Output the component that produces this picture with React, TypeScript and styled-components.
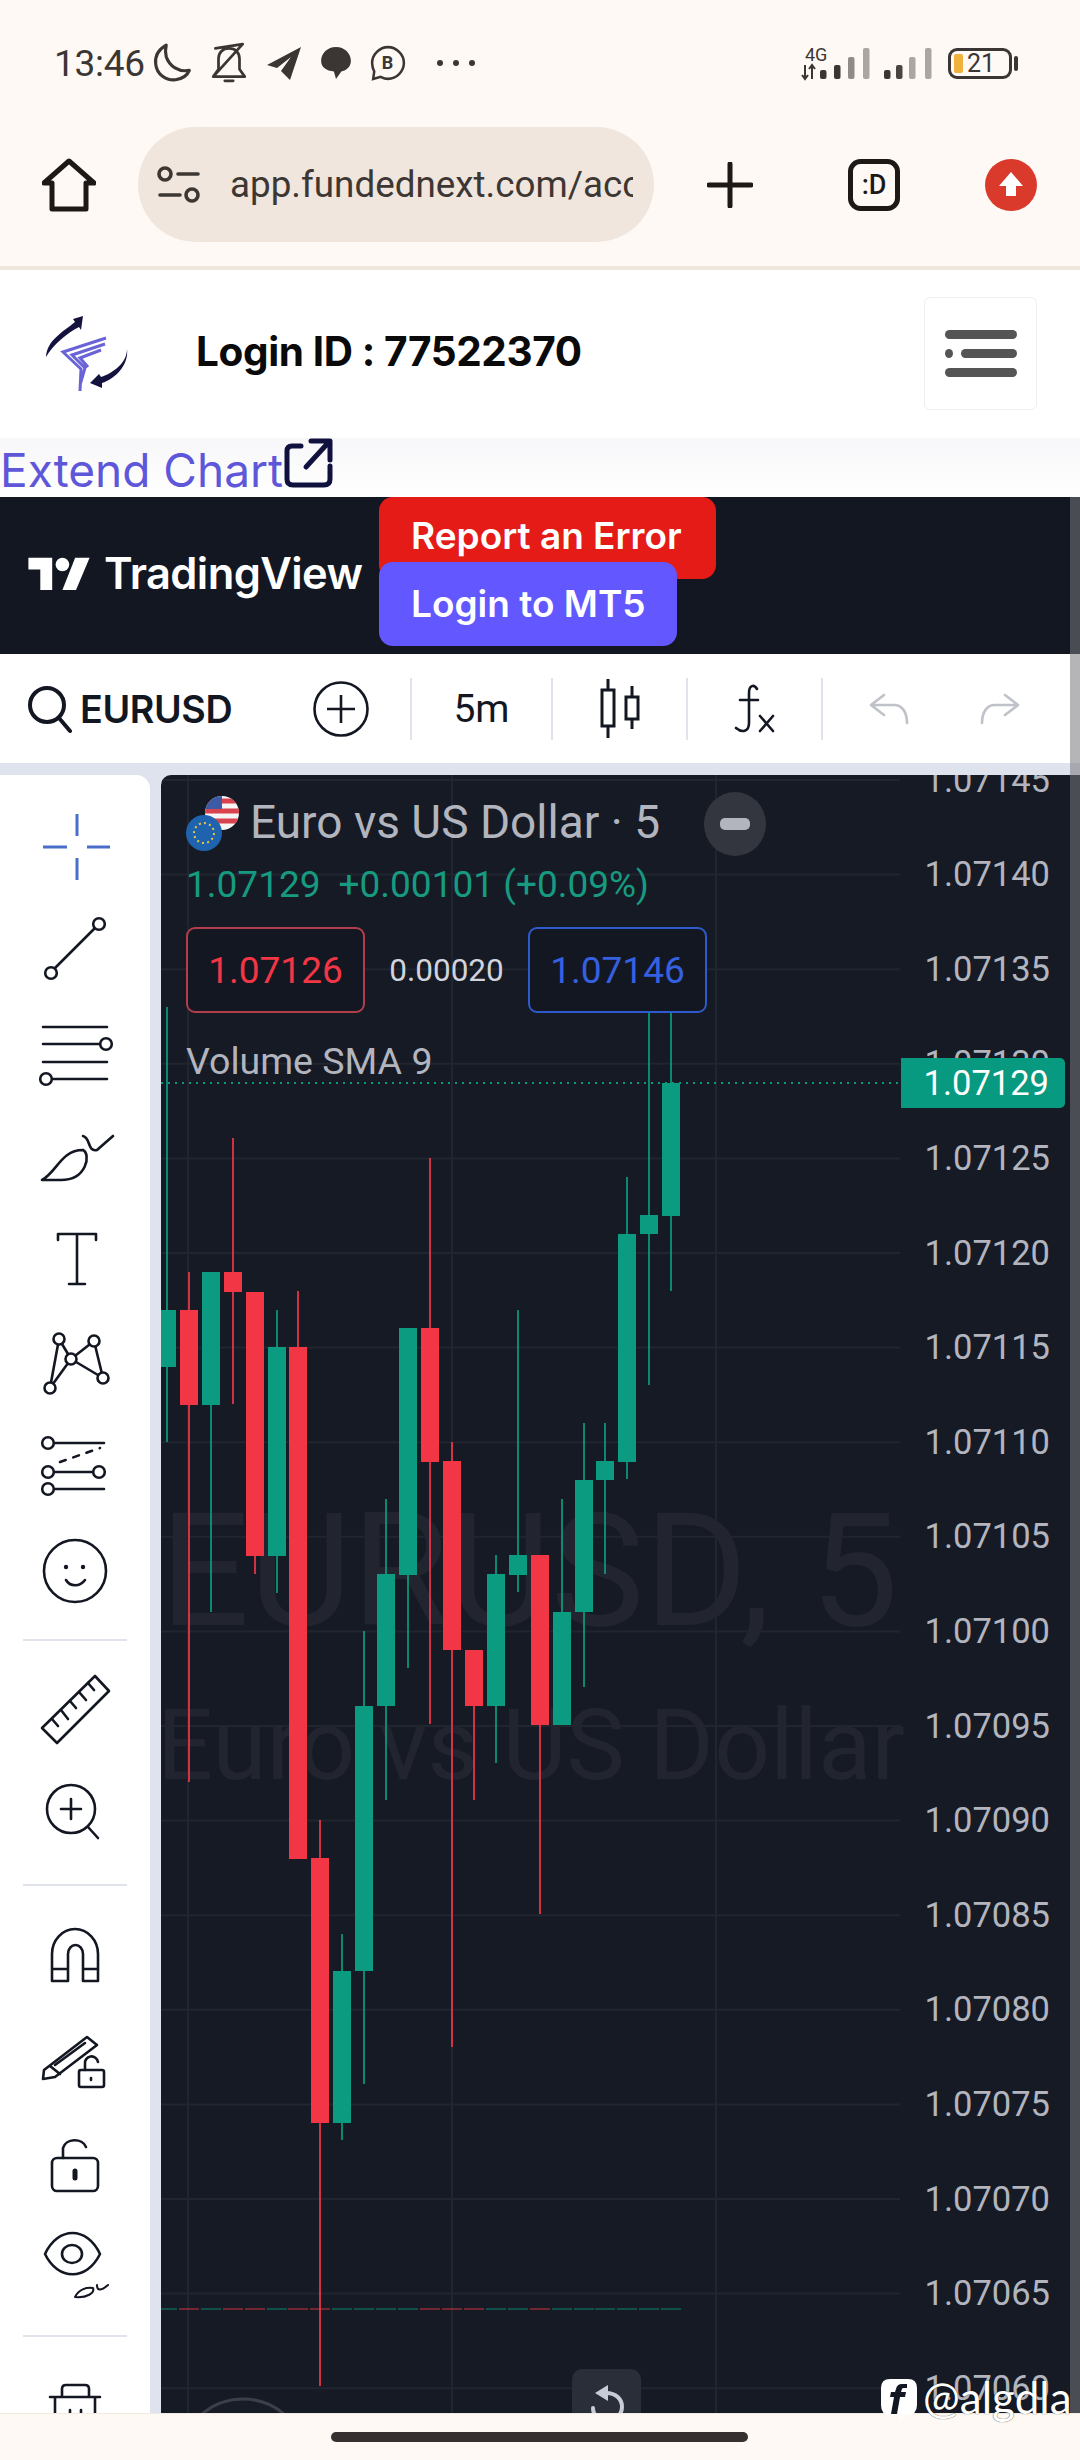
import React from "react";
import styled, { createGlobalStyle } from "styled-components";

const Global = createGlobalStyle`
  html, body { margin: 0; padding: 0; background: #fff9f5; }
  * { box-sizing: border-box; }
  body { font-family: Roboto, "Liberation Sans", sans-serif; }
`;

const Page = styled.div`
  position: relative;
  width: 1080px;
  height: 2460px;
  overflow: hidden;
  display: flex;
  flex-direction: column;
  background: #fff9f5;
`;

/* ---- phone + browser chrome ---- */
const StatusBar = styled.div`
  height: 126px;
  display: flex;
  align-items: center;
  padding: 0 68px 0 54px;
  color: #3b3633;
`;
const Clock = styled.span`
  font-size: 37px;
  letter-spacing: -0.3px;
  margin-right: 7px;
`;
const StatusIcons = styled.div`
  display: flex;
  align-items: center;
  gap: 18px;
  flex: 1;
`;
const StatusRight = styled.div`
  display: flex;
  align-items: center;
  gap: 14px;
`;
const Battery = styled.div`
  position: relative;
  width: 64px;
  height: 31px;
  border: 3px solid #3b3633;
  border-radius: 9px;
  padding: 3px;
  display: flex;
  align-items: center;
  gap: 4px;
  font-size: 25px;
  &::after {
    content: "";
    position: absolute;
    right: -9px;
    top: 5px;
    width: 4px;
    height: 15px;
    border-radius: 2px;
    background: #3b3633;
  }
`;
const BatteryFill = styled.span`
  width: 9px;
  height: 19px;
  background: #efb23c;
  border-radius: 2px;
  flex: none;
`;
const AddressBar = styled.div`
  height: 140px;
  display: flex;
  align-items: flex-start;
  padding: 1px 0 0 42px;
`;
const IconSlot = styled.div<{ $w: number }>`
  width: ${(p) => p.$w}px;
  height: 115px;
  display: flex;
  align-items: center;
  justify-content: center;
  flex: none;
`;
const UrlPill = styled.div`
  width: 516px;
  height: 115px;
  margin-left: 42px;
  border-radius: 58px;
  background: #f0e6dd;
  display: flex;
  align-items: center;
  padding: 0 21px 0 19px;
  gap: 29px;
  flex: none;
`;
const UrlText = styled.span`
  flex: 1;
  overflow: hidden;
  white-space: nowrap;
  font-size: 36.8px;
  color: #3d3734;
`;
const ChromeRule = styled.div`
  height: 4px;
  background: #efe6dc;
`;

/* ---- site header ---- */
const SiteHeader = styled.header`
  height: 168px;
  background: #fff;
  display: flex;
  align-items: center;
  padding: 0 43px 0 43px;
`;
const LoginId = styled.div`
  flex: 1;
  margin-left: 67px;
  font: 700 40.5px Inter, sans-serif;
  letter-spacing: -0.4px;
  color: #0a0a0a;
  margin-top: -6px;
`;
const MenuButton = styled.div`
  width: 113px;
  height: 113px;
  margin-top: -2px;
  border: 1px solid #eeeeee;
  border-radius: 6px;
  display: flex;
  flex-direction: column;
  align-items: center;
  justify-content: center;
  gap: 10px;
`;
const MenuBar = styled.span<{ $short?: boolean }>`
  position: relative;
  width: ${(p) => (p.$short ? 56 : 72)}px;
  height: 9px;
  border-radius: 5px;
  background: #555;
  margin-left: ${(p) => (p.$short ? 16 : 0)}px;
  ${(p) =>
    p.$short
      ? `&::before { content: ""; position: absolute; left: -16px; top: 0; width: 8px; height: 9px; border-radius: 50%; background: #555; }`
      : ""}
`;
const ExtendRow = styled.div`
  height: 59px;
  display: flex;
  align-items: flex-start;
  background: linear-gradient(#f7f7f9, #ffffff);
`;
const ExtendLink = styled.span`
  font: 400 46px/59px Inter, sans-serif;
  color: #5f57d9;
  margin-top: 3px;
  margin-right: 1px;
`;

/* ---- TradingView header ---- */
const TvHeader = styled.div`
  height: 157px;
  background: #131722;
  display: flex;
  align-items: flex-start;
  padding: 0 0 0 28px;
`;
const TvBrand = styled.div`
  width: 351px;
  height: 157px;
  display: flex;
  align-items: center;
  gap: 14px;
  font: 600 43.5px Inter, sans-serif;
  letter-spacing: -0.6px;
  color: #fff;
  flex: none;
  padding-bottom: 5px;
`;
const TvButtons = styled.div`
  display: flex;
  flex-direction: column;
  align-items: flex-start;
`;
const TvButton = styled.div<{ $bg: string; $w: number; $h: number; $over?: boolean }>`
  width: ${(p) => p.$w}px;
  height: ${(p) => p.$h}px;
  background: ${(p) => p.$bg};
  border-radius: 14px;
  color: #fff;
  font: 600 37px Inter, sans-serif;
  padding: 0 0 ${(p) => (p.$over ? 0 : 5)}px 32px;
  margin-top: ${(p) => (p.$over ? -17 : 0)}px;
  display: flex;
  align-items: ${(p) => (p.$over ? "center" : "flex-start")};
  line-height: 78px;
`;

/* ---- chart toolbar ---- */
const ChartToolbar = styled.div`
  height: 109px;
  background: #fff;
  display: flex;
  align-items: center;
`;
const SymbolSearch = styled.div`
  width: 290px;
  display: flex;
  align-items: center;
  gap: 8px;
  padding-left: 26px;
  font: 600 37.7px Inter, sans-serif;
  letter-spacing: -0.4px;
  color: #131722;
  flex: none;
`;
const ToolCell = styled.div<{ $w: number; $rule?: boolean; $pl?: number; $pr?: number }>`
  width: ${(p) => p.$w}px;
  height: 62px;
  display: flex;
  align-items: center;
  justify-content: center;
  font-size: 39px;
  color: #131722;
  flex: none;
  padding: 0 ${(p) => p.$pr ?? 0}px 0 ${(p) => p.$pl ?? 0}px;
  border-right: ${(p) => (p.$rule ? "2px solid #e0e3eb" : "0")};
`;

/* ---- workspace ---- */
const Workspace = styled.div`
  flex: 1;
  min-height: 0;
  padding-top: 12px;
  background: #dfe3ee;
  display: flex;
  gap: 11px;
`;
const SideBar = styled.aside`
  width: 150px;
  flex: none;
  background: #fff;
  border-top-right-radius: 14px;
  overflow: hidden;
  padding-top: 20px;
  display: flex;
  flex-direction: column;
`;
const SideTool = styled.div<{ $h?: number }>`
  height: ${(p) => p.$h ?? 103}px;
  display: flex;
  align-items: center;
  flex: none;
`;
const SideRule = styled.div<{ $top: number; $bottom: number }>`
  height: 2px;
  margin: ${(p) => p.$top}px 23px ${(p) => p.$bottom}px 23px;
  background: #e0e3eb;
  flex: none;
`;
const ChartPane = styled.main`
  position: relative;
  flex: 1;
  background: #161a25;
  border-top-left-radius: 10px;
  overflow: hidden;
`;
const ChartCanvas = styled.svg`
  position: absolute;
  left: 0;
  top: 0;
  display: block;
`;
const Legend = styled.div`
  position: relative;
  padding: 17px 0 0 25px;
  display: flex;
  flex-direction: column;
  font-family: Roboto, sans-serif;
`;
const TitleRow = styled.div`
  height: 64px;
  display: flex;
  align-items: center;
  color: #b2b5be;
  font-size: 46px;
`;
const TitleText = styled.span`
  margin: -4px 44px 0 10px;
`;
const MinusButton = styled.div`
  width: 62px;
  height: 64px;
  border-radius: 50%;
  background: #33363f;
  display: flex;
  align-items: center;
  justify-content: center;
  &::after {
    content: "";
    width: 30px;
    height: 12px;
    border-radius: 5px;
    background: #b2b5be;
  }
`;
const ChangeRow = styled.div`
  height: 44px;
  margin-top: 6px;
  display: flex;
  align-items: center;
  gap: 18px;
  font-size: 37px;
  color: #169a80;
`;
const QuoteRow = styled.div`
  height: 86px;
  margin-top: 21px;
  display: flex;
  align-items: center;
`;
const QuoteBox = styled.div<{ $c: string; $b: string }>`
  width: 179px;
  height: 86px;
  border: 2px solid ${(p) => p.$b};
  border-radius: 9px;
  background: #131722;
  display: flex;
  align-items: center;
  justify-content: center;
  font-size: 37px;
  color: ${(p) => p.$c};
`;
const Spread = styled.div`
  width: 163px;
  text-align: center;
  font-size: 31.5px;
  color: #d1d4dc;
`;
const VolumeLabel = styled.div`
  margin-top: 25px;
  height: 46px;
  line-height: 46px;
  font-size: 37.5px;
  color: #b2b5be;
`;
const AxisColumn = styled.div`
  position: absolute;
  top: -42.7px;
  right: 30px;
  display: flex;
  flex-direction: column;
`;
const AxisLabel = styled.div`
  height: 94.6px;
  display: flex;
  align-items: center;
  font-size: 34.5px;
  color: #b2b5be;
`;
const PriceBadge = styled.div`
  position: absolute;
  left: 740px;
  top: 283px;
  width: 164px;
  height: 50px;
  background: #089981;
  border-radius: 0 5px 5px 0;
  color: #fff;
  font-size: 34.5px;
  display: flex;
  align-items: center;
  justify-content: flex-end;
  padding-right: 16px;
`;
const ResetButton = styled.div`
  position: absolute;
  left: 411px;
  top: 1594px;
  width: 69px;
  height: 66px;
  border-radius: 10px;
  background: #2a2e39;
  display: flex;
  justify-content: center;
  padding-top: 15px;
`;

/* ---- bottom ---- */
const BottomBar = styled.div`
  height: 47px;
  flex: none;
  background: #fff9f5;
  border-top: 1px solid #f2e9e0;
  display: flex;
  justify-content: center;
  padding-top: 18px;
`;
const HomePill = styled.div`
  width: 417px;
  height: 10px;
  margin-left: -1px;
  border-radius: 5px;
  background: #363130;
`;
const ScrollThumb = styled.div`
  position: absolute;
  right: 0;
  top: 497px;
  width: 10px;
  height: 1916px;
  background: rgba(120, 120, 125, 0.55);
`;
const Credit = styled.div`
  position: absolute;
  left: 880px;
  top: 2378px;
  display: flex;
  align-items: center;
  gap: 5px;
  white-space: nowrap;
`;
const CreditName = styled.span`
  font: 400 44px/46px Lato, sans-serif;
  color: #fff;
  margin-top: -6px;
  text-shadow: 0 0 1px #000;
`;

/* ---- data ---- */
const G = "#0a9b80";
const R = "#f23645";
type C = [number, string, number, number, number, number];
const candles: C[] = [
  [167, G, 1007, 1442, 1310, 1367],
  [189, R, 1272, 1782, 1310, 1405],
  [211, G, 1272, 1612, 1272, 1405],
  [233, R, 1138, 1404, 1272, 1292],
  [255, R, 1292, 1574, 1292, 1556],
  [277, G, 1310, 1593, 1347, 1556],
  [298, R, 1291, 1859, 1347, 1859],
  [320, R, 1820, 2386, 1858, 2123],
  [342, G, 1934, 2140, 1971, 2123],
  [364, G, 1631, 2084, 1706, 1971],
  [386, G, 1499, 1800, 1574, 1706],
  [408, G, 1328, 1668, 1328, 1575],
  [430, R, 1158, 1724, 1328, 1462],
  [452, R, 1442, 2047, 1461, 1650],
  [474, R, 1650, 1800, 1650, 1706],
  [496, G, 1555, 1763, 1574, 1706],
  [518, G, 1310, 1592, 1555, 1575],
  [540, R, 1555, 1914, 1555, 1725],
  [562, G, 1499, 1725, 1612, 1725],
  [584, G, 1423, 1687, 1480, 1612],
  [605, G, 1423, 1574, 1461, 1480],
  [627, G, 1177, 1479, 1234, 1462],
  [649, G, 1013, 1385, 1215, 1234],
  [671, G, 1013, 1291, 1083, 1216],
];
const gridY = Array.from({ length: 18 }, (_, i) => 780 + i * 94.6);
const prices = Array.from({ length: 18 }, (_, i) => (1.07145 - i * 0.00005).toFixed(5));

/* ---- icons ---- */
const ToolSvg: React.FC<{ children: React.ReactNode; color?: string; dy?: number }> = ({ children, color = "#131722", dy = 0 }) => (
  <svg width="125" height="100" viewBox={`-25 ${-dy} 125 100`} fill="none" stroke={color} strokeWidth="2.6" strokeLinecap="round" strokeLinejoin="round">
    {children}
  </svg>
);

const Dot: React.FC<{ x: number; y: number; r?: number }> = ({ x, y, r = 5.8 }) => <circle cx={x} cy={y} r={r} fill="#fff" />;

const sideIcons = {
  cross: (
    <ToolSvg color="#4a6fcb">
      <path d="M52 17V39M52 61V83M18 50H42M62 50H85" strokeWidth="3" strokeLinecap="butt" />
    </ToolSvg>
  ),
  line: (
    <ToolSvg dy={-3}>
      <path d="M28 73L72 29" />
      <Dot x={74} y={27} />
      <Dot x={26} y={76} />
    </ToolSvg>
  ),
  fib: (
    <ToolSvg>
      <path d="M18 24H82M18 41H82M18 59H82M20 76H82" />
      <Dot x={81} y={41} />
      <Dot x={21} y={76} />
    </ToolSvg>
  ),
  brush: (
    <ToolSvg>
      <path d="M17 74C32 66 36 44 58 44C66 48 62 74 36 74Z" />
      <path d="M58 30C66 32 62 46 72 44L88 30" />
    </ToolSvg>
  ),
  text: (
    <ToolSvg>
      <path d="M33 31V25H71V31M52 25V75M44 75H60" />
    </ToolSvg>
  ),
  pattern: (
    <ToolSvg dy={-1}>
      <path d="M25 77L34 28L46 48L25 77M46 48L69 30L78 67L46 48" />
      <Dot x={34} y={28} r={5.5} />
      <Dot x={69} y={30} r={5.5} />
      <Dot x={46} y={48} r={5.5} />
      <Dot x={78} y={67} r={5.5} />
      <Dot x={25} y={77} r={5.5} />
    </ToolSvg>
  ),
  forecast: (
    <ToolSvg dy={3}>
      <path d="M23 25H79M23 54H74M23 71H79" />
      <path d="M35 44L75 30" strokeDasharray="6 8" />
      <Dot x={23} y={25} />
      <Dot x={23} y={54} />
      <Dot x={74} y={54} />
      <Dot x={23} y={71} />
    </ToolSvg>
  ),
  smile: (
    <ToolSvg dy={3}>
      <circle cx="50" cy="50" r="31" />
      <circle cx="41" cy="46" r="2.2" fill="#131722" stroke="none" />
      <circle cx="58" cy="46" r="2.2" fill="#131722" stroke="none" />
      <path d="M41 59C45 66 55 66 60 59" />
    </ToolSvg>
  ),
  ruler: (
    <ToolSvg>
      <path d="M17 69L70 17L84 32L32 84Z" />
      <path d="M27 60L33 67M36 51L43 60M45 42L51 49M54 33L61 41M63 24L69 31" />
    </ToolSvg>
  ),
  zoom: (
    <ToolSvg>
      <circle cx="46" cy="47" r="24" />
      <path d="M63 65L73 76M46 37V57M36 47H56" />
    </ToolSvg>
  ),
  magnet: (
    <ToolSvg>
      <path d="M27 77V50A23 25 0 0 1 73 50V77H58V50A7.5 9 0 0 0 43 50V77ZM27 65H43M58 65H73" />
    </ToolSvg>
  ),
  pencil: (
    <ToolSvg>
      <path d="M19 63L62 30L72 38L30 70L18 72ZM25 59L35 67M30 58L60 36" />
      <rect x="54" y="63" width="25" height="17" rx="2" />
      <path d="M60 63V57A6.5 6.5 0 0 1 73 55M66 71V73" />
    </ToolSvg>
  ),
  lock: (
    <ToolSvg dy={3}>
      <rect x="27" y="45" width="46" height="33" rx="5" />
      <path d="M38 45V35A12 10 0 0 1 61 34" />
      <path d="M50 58V65" strokeWidth="5" />
    </ToolSvg>
  ),
  eye: (
    <ToolSvg>
      <path d="M20 41C33 13 62 13 75 41C62 68 33 68 20 41Z" />
      <ellipse cx="47" cy="41" rx="10" ry="9" />
      <path d="M50 84C54 76 62 74 68 75C70 80 62 85 50 84ZM72 72C72 78 76 78 83 72" strokeWidth="2" />
    </ToolSvg>
  ),
  trash: (
    <ToolSvg>
      <path d="M25 42H75M37 42V34Q37 30 41 30H60Q64 30 64 34V42M30 42V75M70 42V75M45 55V75M56 55V75" />
    </ToolSvg>
  ),
};

const Moon = () => (
  <svg width="40" height="42" viewBox="0 0 37 40" fill="none" stroke="#3b3633" strokeWidth="3" strokeLinecap="round" strokeLinejoin="round">
    <path d="M13 3C6 7 2 13 3 21C4 31 13 37 22 36C28 35 33 32 35 27C25 29 16 23 13 14C12 10 12 7 13 3Z" />
  </svg>
);
const BellOff = () => (
  <svg width="38" height="42" viewBox="0 0 36 40" fill="none" stroke="#3b3633" strokeWidth="2.6" strokeLinecap="round" strokeLinejoin="round">
    <path d="M3 33H33L28 26V16C28 10 24 6 18 6C12 6 8 10 8 16V26ZM14 37H22M5 6L31 2M31 2L3 33" />
  </svg>
);
const Telegram = () => (
  <svg width="36" height="36" viewBox="0 0 36 36" fill="#3b3633">
    <path d="M35 2L1 20L11 23L25 12L15 26L24 35Z" />
  </svg>
);
const Bubble = () => (
  <svg width="32" height="34" viewBox="0 0 30 32" fill="#3b3633">
    <path d="M15 1C23 1 29 7 29 14C29 20 24 23 20 24L15 31L13 24C6 23 1 20 1 14C1 7 7 1 15 1Z" />
  </svg>
);
const Whatsapp = () => (
  <svg width="36" height="36" viewBox="0 0 34 34" fill="none" stroke="#3b3633" strokeWidth="2.4">
    <path d="M17 2C9 2 2 9 2 17C2 20 3 23 4 25L3 32L10 30C12 31 14 32 17 32C25 32 32 25 32 17C32 9 25 2 17 2Z" />
    <text x="11" y="23" fontFamily="Roboto, sans-serif" fontSize="17" fontWeight="700" stroke="none" fill="#3b3633">B</text>
  </svg>
);
const More = () => (
  <svg width="40" height="8" viewBox="0 0 40 8" fill="#3b3633" style={{ marginLeft: 12 }}>
    <circle cx="4" cy="4" r="3" />
    <circle cx="20" cy="4" r="3" />
    <circle cx="36" cy="4" r="3" />
  </svg>
);
const bars: [number, number, string][] = [
  [23, 70, "#3b3633"],
  [37, 65, "#3b3633"],
  [51, 57, "#8f8b88"],
  [66, 48, "#aaa6a3"],
  [87, 70, "#3b3633"],
  [99, 65, "#4a4542"],
  [112, 57, "#aaa6a3"],
  [128, 48, "#aaa6a3"],
];
const Signals = () => (
  <svg width="134" height="40" viewBox="0 43 134 40">
    <text x="5" y="61" fontFamily="Roboto, sans-serif" fontSize="18" fill="#3b3633">4G</text>
    <path d="M5 65V79M2 75L5 79L8 75M12 79V65M9 69L12 65L15 69" stroke="#3b3633" strokeWidth="2" fill="none" />
    {bars.map(([x, top, c]) => (
      <rect key={x} x={x - 3} y={top} width="6.5" height={79 - top} rx="2" fill={c} />
    ))}
  </svg>
);
const HomeIcon = () => (
  <svg width="54" height="54" viewBox="0 0 54 54" fill="none" stroke="#1c1917" strokeWidth="5" strokeLinejoin="round">
    <path d="M2 25L27 3L52 25H44V51H10V25Z" />
  </svg>
);
const SiteControls = () => (
  <svg width="44" height="42" viewBox="0 0 44 42" fill="none" stroke="#3d3734" strokeWidth="3.6" strokeLinecap="round">
    <circle cx="8" cy="10" r="6" />
    <circle cx="35" cy="31" r="6" />
    <path d="M21 10H41M3 31H23" />
  </svg>
);
const PlusIcon = () => (
  <svg width="46" height="46" viewBox="0 0 46 46" stroke="#1c1917" strokeWidth="5" strokeLinecap="round">
    <path d="M23 2V44M2 23H44" />
  </svg>
);
const TabIcon = () => (
  <svg width="52" height="52" viewBox="0 0 52 52">
    <rect x="2.5" y="2.5" width="47" height="47" rx="10" fill="none" stroke="#1c1917" strokeWidth="5" />
    <text x="26" y="35" textAnchor="middle" fontFamily="Roboto, sans-serif" fontSize="27" fontWeight="500" fill="#1c1917">:D</text>
  </svg>
);
const UpdateIcon = () => (
  <svg width="52" height="52" viewBox="0 0 52 52">
    <circle cx="26" cy="26" r="26" fill="#d93a2b" />
    <path d="M26 13L38 27H31V37H21V27H14Z" fill="#fff" />
  </svg>
);
const SiteLogo = () => (
  <svg width="86" height="78" viewBox="0 0 86 78" fill="none">
    <path d="M40 1L30 4L32 7C20 17 4 25 3 42C10 30 24 18 36 12L38 15Z" fill="#14133f" />
    <path d="M84 34C84 48 70 58 58 62L56 59L47 68L59 73L59 68C72 64 86 50 84 34Z" fill="#14133f" />
    <path d="M63 23L20 37L38 54L37 76M62 29L29 40L42 53L37 70M58 35L37 43L45 52" stroke="#6a63d8" strokeWidth="3" />
  </svg>
);
const MenuStack = () => (
  <MenuButton>
    <MenuBar />
    <MenuBar $short />
    <MenuBar />
  </MenuButton>
);
const ExtendIcon = () => (
  <svg width="50" height="50" viewBox="0 0 50 50" fill="none" stroke="#11113f" strokeWidth="5" strokeLinecap="round" strokeLinejoin="round" style={{ flex: "none" }}>
    <path d="M17 8H8Q3 8 3 13V41Q3 47 9 47H40Q46 47 46 41V28" />
    <path d="M22 29L44 5M27 3H46V22" />
  </svg>
);
const TvLogo = () => (
  <svg width="62" height="34" viewBox="0 0 36 20" fill="#fff" style={{ flex: "none" }}>
    <path d="M14 20H7V8H0V1h14z" />
    <path d="M28 20H20L27.5 1H36z" />
    <circle cx="20" cy="5" r="4" />
  </svg>
);
const SearchIcon = () => (
  <svg width="46" height="50" viewBox="0 0 46 50" fill="none" stroke="#131722" strokeWidth="4" strokeLinecap="round">
    <circle cx="21" cy="21" r="17" />
    <path d="M33 34L44 47" />
  </svg>
);
const AddCircle = () => (
  <svg width="56" height="56" viewBox="0 0 56 56" fill="none" stroke="#131722" strokeWidth="2.6">
    <circle cx="28" cy="28" r="26.5" />
    <path d="M28 14V42M14 28H42" />
  </svg>
);
const CandleIcon = () => (
  <svg width="42" height="60" viewBox="0 0 42 60" fill="none" stroke="#131722" strokeWidth="3">
    <rect x="3" y="11" width="12" height="36" />
    <rect x="27" y="18" width="12" height="22" />
    <path d="M9 0V11M9 47V59M33 7V18M33 40V50" />
  </svg>
);
const FxIcon = () => (
  <svg width="42" height="50" viewBox="0 0 42 50" fill="none" stroke="#131722" strokeWidth="2.6" strokeLinecap="round">
    <path d="M23 5C20 0 15 1 15 9V39C15 48 8 49 2 44M6 16H24M26 32L39 47M39 32L26 47" />
  </svg>
);
const UndoIcon: React.FC<{ flip?: boolean }> = ({ flip }) => (
  <svg width="42" height="32" viewBox="0 0 42 32" fill="none" stroke="#bfc2c9" strokeWidth="2.6" strokeLinecap="round" strokeLinejoin="round" style={flip ? { transform: "scaleX(-1)" } : undefined}>
    <path d="M16 2L3 12L16 22M3 12H26C34 12 39 19 39 30" />
  </svg>
);
const FlagIcon = () => (
  <svg width="54" height="58" viewBox="0 0 54 58" style={{ flex: "none" }}>
    <clipPath id="usf"><circle cx="36" cy="18" r="17" /></clipPath>
    <g clipPath="url(#usf)">
      <rect x="18" y="0" width="36" height="36" fill="#f5f5f5" />
      <path d="M18 6H54M18 16H54M18 26H54" stroke="#d9434e" strokeWidth="5" />
      <rect x="18" y="0" width="18" height="14" fill="#3c5aa6" />
    </g>
    <circle cx="18" cy="38" r="18" fill="#1f63ae" />
    <circle cx="18" cy="38" r="10" fill="none" stroke="#e7c93b" strokeWidth="2" strokeDasharray="2 3.2" />
  </svg>
);
const ResetIcon = () => (
  <svg width="36" height="40" viewBox="0 0 36 40" fill="none" stroke="#c9ccd5" strokeWidth="4" strokeLinecap="round">
    <path d="M17 9C27 9 33 15 33 23C33 31 26 37 18 37C10 37 4 31 4 24" />
    <path d="M19 1V17L6 9Z" fill="#c9ccd5" stroke="none" />
  </svg>
);
const FeedLogo = () => (
  <svg width="38" height="44" viewBox="0 0 38 44" style={{ flex: "none" }}>
    <path d="M10 1H28Q37 1 37 10V27Q37 37 27 37H25L19 43L21 37H10Q1 37 1 27V10Q1 1 10 1Z" fill="#fff" />
    <path d="M27 6H22Q17 6 16 11L15 14H11L10 19H14L11 36H17L20 19H25L26 14H21L22 11Q22 10 24 10H27Z" fill="#131722" />
  </svg>
);

const Chart = () => (
  <ChartCanvas width="919" height="1638" viewBox="161 775 919 1638">
    {gridY.map((y) => (
      <line key={y} x1="161" x2="900" y1={y} y2={y} stroke="#21252f" strokeWidth="2" />
    ))}
    {[188, 452, 716].map((x) => (
      <line key={x} x1={x} x2={x} y1="775" y2="2413" stroke="#21252f" strokeWidth="2" />
    ))}
    <text x="160" y="1625" fontFamily="Roboto, sans-serif" fontSize="157.5" fill="#22252f">EURUSD, 5</text>
    <text x="157" y="1779" fontFamily="Roboto, sans-serif" fontSize="98.5" fill="#22252f">Euro vs US Dollar</text>
    {candles.map(([x, c]) => (
      <line key={x} x1={x - 10} x2={x + 10} y1="2309" y2="2309" stroke={c} strokeOpacity="0.42" strokeWidth="2" />
    ))}
    {candles.map(([x, c, wt, wb, bt, bb]) => (
      <g key={x} fill={c}>
        <rect x={x - 1} y={wt} width="2" height={wb - wt} opacity="0.85" />
        <rect x={x - 9} y={bt} width="18" height={bb - bt} />
      </g>
    ))}
    <line x1="161" x2="901" y1="1083" y2="1083" stroke="#089981" strokeWidth="2" strokeDasharray="2 5" />
    <circle cx="243" cy="2462" r="63" fill="#181c27" stroke="#3c3f4a" strokeWidth="3" />
  </ChartCanvas>
);

const rows1 = ["cross", "line", "fib", "brush", "text", "pattern", "forecast", "smile"] as const;

export default function App() {
  return (
    <Page>
      <Global />
      <StatusBar>
        <Clock>13:46</Clock>
        <StatusIcons>
          <Moon />
          <BellOff />
          <Telegram />
          <Bubble />
          <Whatsapp />
          <More />
        </StatusIcons>
        <StatusRight>
          <Signals />
          <Battery>
            <BatteryFill />
            21
          </Battery>
        </StatusRight>
      </StatusBar>
      <AddressBar>
        <IconSlot $w={54}><HomeIcon /></IconSlot>
        <UrlPill>
          <SiteControls />
          <UrlText>app.fundednext.com/account/chart</UrlText>
        </UrlPill>
        <IconSlot $w={152}><PlusIcon /></IconSlot>
        <IconSlot $w={136}><TabIcon /></IconSlot>
        <IconSlot $w={138}><UpdateIcon /></IconSlot>
      </AddressBar>
      <ChromeRule />
      <SiteHeader>
        <SiteLogo />
        <LoginId>Login ID : 77522370</LoginId>
        <MenuStack />
      </SiteHeader>
      <ExtendRow>
        <ExtendLink>Extend Chart</ExtendLink>
        <ExtendIcon />
      </ExtendRow>
      <TvHeader>
        <TvBrand>
          <TvLogo />
          TradingView
        </TvBrand>
        <TvButtons>
          <TvButton $bg="#e41b17" $w={337} $h={82}>Report an Error</TvButton>
          <TvButton $bg="#6358ff" $w={298} $h={84} $over>Login to MT5</TvButton>
        </TvButtons>
      </TvHeader>
      <ChartToolbar>
        <SymbolSearch>
          <SearchIcon />
          EURUSD
        </SymbolSearch>
        <ToolCell $w={122} $rule $pr={18}><AddCircle /></ToolCell>
        <ToolCell $w={141} $rule>5m</ToolCell>
        <ToolCell $w={135} $rule><CandleIcon /></ToolCell>
        <ToolCell $w={135} $rule><FxIcon /></ToolCell>
        <ToolCell $w={122} $pl={10}><UndoIcon /></ToolCell>
        <ToolCell $w={100} $pl={10}><UndoIcon flip /></ToolCell>
      </ChartToolbar>
      <Workspace>
        <SideBar>
          {rows1.map((k) => (
            <SideTool key={k}>{sideIcons[k]}</SideTool>
          ))}
          <SideRule $top={20} $bottom={16} />
          <SideTool>{sideIcons.ruler}</SideTool>
          <SideTool>{sideIcons.zoom}</SideTool>
          <SideRule $top={21} $bottom={16} />
          <SideTool>{sideIcons.magnet}</SideTool>
          <SideTool>{sideIcons.pencil}</SideTool>
          <SideTool>{sideIcons.lock}</SideTool>
          <SideTool>{sideIcons.eye}</SideTool>
          <SideRule $top={21} $bottom={16} />
          <SideTool>{sideIcons.trash}</SideTool>
        </SideBar>
        <ChartPane>
          <Chart />
          <AxisColumn>
            {prices.map((p) => (
              <AxisLabel key={p}>{p}</AxisLabel>
            ))}
          </AxisColumn>
          <PriceBadge>1.07129</PriceBadge>
          <Legend>
            <TitleRow>
              <FlagIcon />
              <TitleText>Euro vs US Dollar · 5</TitleText>
              <MinusButton />
            </TitleRow>
            <ChangeRow>
              <span>1.07129</span>
              <span>+0.00101 (+0.09%)</span>
            </ChangeRow>
            <QuoteRow>
              <QuoteBox $c="#f23645" $b="#b23e4c">1.07126</QuoteBox>
              <Spread>0.00020</Spread>
              <QuoteBox $c="#3560e0" $b="#2e5acb">1.07146</QuoteBox>
            </QuoteRow>
            <VolumeLabel>Volume SMA 9</VolumeLabel>
          </Legend>
          <ResetButton><ResetIcon /></ResetButton>
        </ChartPane>
      </Workspace>
      <BottomBar>
        <HomePill />
      </BottomBar>
      <ScrollThumb />
      <Credit>
        <FeedLogo />
        <CreditName>@algdla</CreditName>
      </Credit>
    </Page>
  );
}
